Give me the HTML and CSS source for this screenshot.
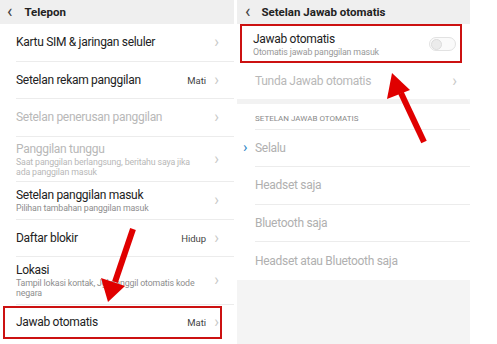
FILE: index.html
```html
<!DOCTYPE html>
<html lang="id">
<head>
    <meta charset="UTF-8">
    <meta name="viewport" content="width=device-width, initial-scale=1.0">
    <title>Jawab otomatis</title>
    <link rel="stylesheet" href="styles.css">
</head>
<body>
    <div class="screens">
        <!-- Left screen: Telepon -->
        <div class="panel left">
            <div class="header"><span class="back">&lsaquo;</span>Telepon</div>

            <div class="row h38">
                <div class="text"><div class="title">Kartu SIM &amp; jaringan seluler</div></div>
                <span class="chev">&rsaquo;</span>
            </div>
            <div class="row h37">
                <div class="text"><div class="title">Setelan rekam panggilan</div></div>
                <span class="value">Mati</span><span class="chev">&rsaquo;</span>
            </div>
            <div class="row h38 disabled">
                <div class="text"><div class="title">Setelan penerusan panggilan</div></div>
                <span class="chev">&rsaquo;</span>
            </div>
            <div class="row h45 disabled">
                <div class="text">
                    <div class="title">Panggilan tunggu</div>
                    <div class="sub">Saat panggilan berlangsung, beritahu saya jika ada panggilan masuk</div>
                </div>
                <span class="chev">&rsaquo;</span>
            </div>
            <div class="row h38">
                <div class="text">
                    <div class="title">Setelan panggilan masuk</div>
                    <div class="sub">Pilihan tambahan panggilan masuk</div>
                </div>
                <span class="chev">&rsaquo;</span>
            </div>
            <div class="row h37">
                <div class="text"><div class="title">Daftar blokir</div></div>
                <span class="value">Hidup</span><span class="chev">&rsaquo;</span>
            </div>
            <div class="row h48">
                <div class="text">
                    <div class="title">Lokasi</div>
                    <div class="sub">Tampil lokasi kontak, Jgl panggil otomatis kode negara</div>
                </div>
                <span class="chev">&rsaquo;</span>
            </div>
            <div class="row marked">
                <div class="text"><div class="title">Jawab otomatis</div></div>
                <span class="value">Mati</span><span class="chev">&rsaquo;</span>
            </div>
        </div>

        <!-- Right screen: Setelan Jawab otomatis -->
        <div class="panel right">
            <div class="header"><span class="back">&lsaquo;</span>Setelan Jawab otomatis</div>
            <div class="list">
                <div class="row marked-top">
                    <div class="text">
                        <div class="title">Jawab otomatis</div>
                        <div class="sub">Otomatis jawab panggilan masuk</div>
                    </div>
                    <span class="toggle"><span class="knob"></span></span>
                </div>
                <div class="row h36 disabled last">
                    <div class="text"><div class="title">Tunda Jawab otomatis</div></div>
                    <span class="chev">&rsaquo;</span>
                </div>
            </div>
            <div class="spacer"></div>
            <div class="list">
                <div class="section">SETELAN JAWAB OTOMATIS</div>
                <div class="row h37 option"><span class="pick">&rsaquo;</span><div class="title">Selalu</div></div>
                <div class="row h38 option"><div class="title">Headset saja</div></div>
                <div class="row h37 option"><div class="title">Bluetooth saja</div></div>
                <div class="row h38 option last"><div class="title">Headset atau Bluetooth saja</div></div>
            </div>
        </div>
    </div>

    <!-- Red annotation arrows -->
    <svg class="arrows" width="497" height="344" viewBox="0 0 497 344">
        <line x1="133" y1="229" x2="115" y2="282" stroke="#e00000" stroke-width="6"/>
        <polygon points="108,302 101,278 125,286" fill="#e00000"/>
        <line x1="424" y1="142" x2="401" y2="93" stroke="#e00000" stroke-width="6"/>
        <polygon points="392,73 387,99 410,90" fill="#e00000"/>
    </svg>
</body>
</html>
```

FILE: styles.css
```css
* {
    margin: 0;
    padding: 0;
    box-sizing: border-box;
}

body {
    width: 497px;
    height: 344px;
    overflow: hidden;
    position: relative;
    font-family: Roboto, "Noto Sans", sans-serif;
    background-color: #fff;
    color: #222;
}

.screens {
    display: flex;
    gap: 3px;
    height: 344px;
}

.panel {
    display: flex;
    flex-direction: column;
    height: 344px;
}

.panel.left {
    width: 234px;
    background-color: #fff;
}

.panel.right {
    width: 233px;
    background-color: #f4f4f4;
}

.header {
    height: 24px;
    flex: none;
    display: flex;
    align-items: center;
    background-color: #efefef;
    font-size: 11.5px;
    font-weight: bold;
    color: #222;
    padding-left: 7px;
}

.back {
    font-size: 18px;
    font-weight: normal;
    color: #444;
    margin-right: 12px;
    margin-top: -3px;
}

.right .header {
    padding-left: 8px;
}

.right .back {
    margin-right: 11px;
}

.row {
    display: flex;
    align-items: center;
    margin-left: 16px;
    border-bottom: 1px solid #ececec;
    padding-right: 15px;
    background-color: #fff;
}

.h36 { height: 36px; }
.h37 { height: 37px; }
.h38 { height: 38px; }
.h45 { height: 45px; }
.h48 { height: 48px; }

.text {
    flex: 1;
    min-width: 0;
}

.title {
    font-size: 12px;
    line-height: 15px;
    letter-spacing: -0.3px;
}

.sub {
    font-size: 8.8px;
    line-height: 10px;
    color: #8e8e8e;
    max-width: 190px;
    letter-spacing: -0.15px;
}

.disabled .title,
.disabled .sub {
    color: #b8b8b8;
}

.value {
    font-size: 9.5px;
    color: #444;
    margin-right: 8px;
}

.chev {
    font-size: 16px;
    color: #c8c8c8;
    margin-top: -2px;
}

.row.marked {
    height: 33px;
    margin: 1px 12px 0 3px;
    border: 2px solid #cc1111;
    padding-left: 11px;
    padding-right: 1px;
}

/* right screen */
.list {
    background-color: #fff;
}

.right .row {
    margin-left: 18px;
    padding-right: 13px;
}

.right .row.marked-top {
    height: 39px;
    margin: 0 8px 0 3px;
    border: 2px solid #cc1111;
    padding-left: 11px;
    padding-right: 4px;
    padding-top: 1px;
}

.right .row.last {
    border-bottom: none;
}

.right .sub {
    max-width: none;
    color: #999;
}

.toggle {
    width: 27px;
    height: 14px;
    border: 1px solid #e2e2e2;
    border-radius: 7px;
    background-color: #fafafa;
    display: flex;
    align-items: center;
    padding-left: 1px;
}

.knob {
    width: 11px;
    height: 11px;
    border-radius: 50%;
    background-color: #ebebeb;
    border: 1px solid #dcdcdc;
}

.spacer {
    height: 5px;
    background-color: #f2f2f2;
}

.section {
    height: 26px;
    margin-left: 18px;
    display: flex;
    align-items: center;
    padding-top: 4px;
    font-size: 8px;
    color: #8a8a8a;
    border-bottom: 1px solid #ececec;
}

.option .title {
    color: #b0b0b0;
}

.right .row.option {
    position: relative;
}

.pick {
    position: absolute;
    left: -12px;
    top: 8px;
    font-size: 15px;
    color: #2b87c7;
}

.arrows {
    position: absolute;
    left: 0;
    top: 0;
    pointer-events: none;
}
```
